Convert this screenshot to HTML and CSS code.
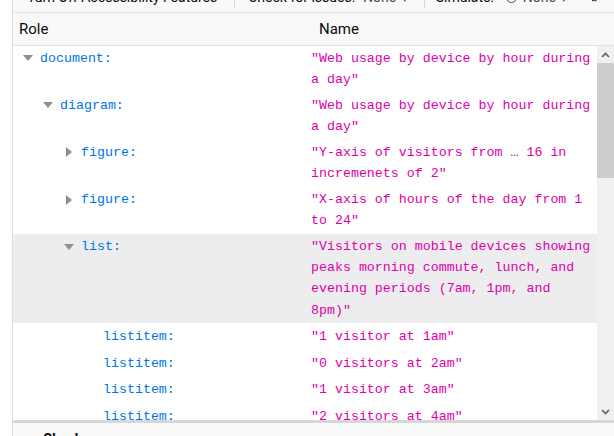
FILE: index.html
```html
<!DOCTYPE html>
<html>
<head>
<meta charset="utf-8">
<link rel="stylesheet" href="styles.css">
</head>
<body>
<div class="gutter"></div>
<div class="panel">
  <div class="toolbar">
    <span class="tb-btn">Turn Off Accessibility Features</span>
    <span class="sep sep1"></span>
    <span class="tb-label">Check for issues:</span>
    <span class="tb-value">None <span class="caret">▾</span></span>
    <span class="sep sep2"></span>
    <span class="tb-label">Simulate:</span>
    <span class="sim-icon"></span>
    <span class="tb-value">None <span class="caret">▾</span></span>
    <svg class="gear" width="16" height="16" viewBox="0 0 16 16"><path d="M8 1.5l1.2 1.6 2-.5.3 2 1.9.8-.8 1.9 1.2 1.6-1.8 1-.1 2-2-.1-1 1.8-1.7-1.1-1.7 1.1-1-1.8-2 .1-.1-2-1.8-1 1.2-1.6-.8-1.9 1.9-.8.3-2 2 .5z" fill="#3a3a3e"/><circle cx="8" cy="8" r="2.2" fill="#f9f9fa"/></svg>
  </div>
  <div class="header">
    <div class="h-role">Role</div>
    <div class="h-name">Name</div>
  </div>
  <div class="tree-wrap">
    <div class="tree">
      <div class="row lvl0">
        <div class="role"><span class="twisty"><span class="tri-down"></span></span><span class="rtext">document:</span></div>
        <div class="name">"Web usage by device by hour during a day"</div>
      </div>
      <div class="row lvl1">
        <div class="role"><span class="twisty"><span class="tri-down"></span></span><span class="rtext">diagram:</span></div>
        <div class="name">"Web usage by device by hour during a day"</div>
      </div>
      <div class="row lvl2">
        <div class="role"><span class="twisty"><span class="tri-right"></span></span><span class="rtext">figure:</span></div>
        <div class="name">"Y-axis of visitors from … 16 in incremenets of 2"</div>
      </div>
      <div class="row lvl2">
        <div class="role"><span class="twisty"><span class="tri-right"></span></span><span class="rtext">figure:</span></div>
        <div class="name">"X-axis of hours of the day from 1 to 24"</div>
      </div>
      <div class="row lvl3 selected">
        <div class="role"><span class="twisty"><span class="tri-down"></span></span><span class="rtext">list:</span></div>
        <div class="name">"Visitors on mobile devices showing peaks morning commute, lunch, and evening periods (7am, 1pm, and 8pm)"</div>
      </div>
      <div class="row lvl4 single">
        <div class="role"><span class="twisty"></span><span class="rtext">listitem:</span></div>
        <div class="name">"1 visitor at 1am"</div>
      </div>
      <div class="row lvl4 single">
        <div class="role"><span class="twisty"></span><span class="rtext">listitem:</span></div>
        <div class="name">"0 visitors at 2am"</div>
      </div>
      <div class="row lvl4 single">
        <div class="role"><span class="twisty"></span><span class="rtext">listitem:</span></div>
        <div class="name">"1 visitor at 3am"</div>
      </div>
      <div class="row lvl4 single">
        <div class="role"><span class="twisty"></span><span class="rtext">listitem:</span></div>
        <div class="name">"2 visitors at 4am"</div>
      </div>
    </div>
    <div class="scrollbar">
      <div class="sb-btn"><svg width="9" height="6" viewBox="0 0 9 6"><path d="M1 5l3.5-3.5L8 5" fill="none" stroke="#606060" stroke-width="1.6"/></svg></div>
      <div class="sb-thumb"></div>
      <div class="sb-track"></div>
      <div class="sb-btn"><svg width="9" height="6" viewBox="0 0 9 6"><path d="M1 1l3.5 3.5L8 1" fill="none" stroke="#606060" stroke-width="1.6"/></svg></div>
    </div>
  </div>
  <div class="splitter"></div>
  <div class="checks">Checks</div>
</div>
</body>
</html>
```
FILE: styles.css
```css
html, body {
  margin: 0;
  padding: 0;
}
body {
  width: 614px;
  height: 436px;
  overflow: hidden;
  display: flex;
  background: #ffffff;
  font-family: Roboto, "Noto Sans", sans-serif;
  color: #0c0c0d;
}
.gutter {
  width: 12px;
  flex: none;
  background: #ffffff;
}
.panel {
  flex: 1;
  min-width: 0;
  border-left: 1px solid #e0e0e2;
  display: flex;
  flex-direction: column;
  background: #ffffff;
}
.toolbar {
  box-sizing: border-box;
  height: 31px;
  margin-top: -18px;
  flex: none;
  display: flex;
  align-items: center;
  background: #f9f9fa;
  border-bottom: 1px solid #e0e0e2;
  font-size: 14px;
  white-space: nowrap;
}
.tb-btn {
  margin-left: 14px;
  color: #0c0c0d;
}
.sep {
  width: 1px;
  height: 22px;
  background: #d7d7db;
}
.sep1 { margin-left: 17px; margin-right: 13px; }
.sep2 { margin-left: 16px; margin-right: 11px; }
.tb-label { color: #0c0c0d; }
.tb-value {
  margin-left: 8px;
  color: #4a4a4f;
}
.caret {
  font-size: 11px;
  margin-left: 2px;
}
.sim-icon {
  width: 9px;
  height: 9px;
  border: 1.5px solid #4a4a4f;
  border-radius: 50%;
  margin-left: 12px;
  margin-right: -2px;
}
.gear {
  margin-left: auto;
  margin-right: 11px;
  margin-top: -3px;
}
.header {
  box-sizing: border-box;
  height: 33px;
  flex: none;
  display: flex;
  align-items: center;
  background: #f9f9fa;
  border-bottom: 1px solid #e0e0e2;
  font-size: 15px;
}
.h-role {
  width: 298px;
  box-sizing: border-box;
  padding-left: 6px;
}
.h-name {
  padding-left: 8px;
}
.tree-wrap {
  flex: 1;
  min-height: 0;
  display: flex;
  overflow: hidden;
}
.tree {
  flex: 1;
  overflow: hidden;
  margin-top: -1px;
  font-family: "Liberation Mono", "DejaVu Sans Mono", monospace;
  font-size: 13.3px;
  line-height: 21.1px;
}
.row {
  display: flex;
  padding: 2.5px 0;
}
.row.single {
  padding: 2.8px 0;
}
.row.selected {
  background: #ededf0;
}
.role {
  width: 298px;
  flex: none;
  box-sizing: border-box;
  display: flex;
  align-items: flex-start;
  color: #0074e8;
}
.lvl0 .role { padding-left: 9px; }
.lvl1 .role { padding-left: 29px; }
.lvl2 .role { padding-left: 50px; }
.lvl3 .role { padding-left: 50px; }
.lvl4 .role { padding-left: 72px; }
.twisty {
  width: 12px;
  height: 21.1px;
  margin-right: 6px;
  flex: none;
  display: flex;
  align-items: center;
  justify-content: center;
}
.tri-down {
  width: 0;
  height: 0;
  border-left: 5px solid transparent;
  border-right: 5px solid transparent;
  border-top: 6px solid #8f8f8f;
}
.tri-right {
  width: 0;
  height: 0;
  border-top: 5px solid transparent;
  border-bottom: 5px solid transparent;
  border-left: 6px solid #8f8f8f;
}
.name {
  width: 283px;
  flex: none;
  color: #dd00a9;
}
.scrollbar {
  width: 17px;
  flex: none;
  display: flex;
  flex-direction: column;
  background: #f0f0f0;
}
.sb-btn {
  height: 17px;
  flex: none;
  display: flex;
  align-items: center;
  justify-content: center;
}
.sb-thumb {
  height: 115px;
  flex: none;
  background: #cdcdcd;
}
.sb-track {
  flex: 1;
}
.splitter {
  height: 3px;
  flex: none;
  background: #d7d7db;
}
.checks {
  height: 13px;
  flex: none;
  box-sizing: border-box;
  padding-left: 30px;
  padding-top: 6px;
  background: #f9f9fa;
  font-size: 14px;
  font-weight: 700;
  line-height: 20px;
  overflow: visible;
}
```
